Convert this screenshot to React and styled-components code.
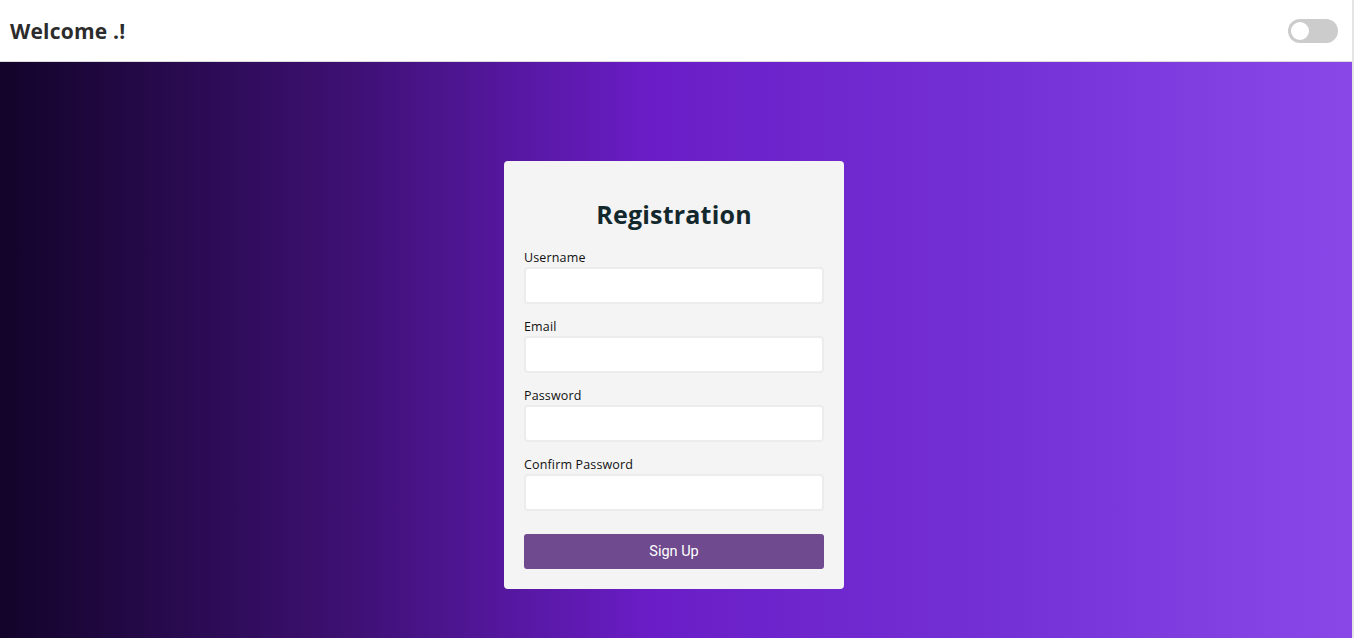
import React from 'react'
import styled, { createGlobalStyle } from 'styled-components'

const Global = createGlobalStyle`
  html, body {
    margin: 0;
    padding: 0;
    height: 100%;
    font-family: "Open Sans", "Liberation Sans", sans-serif;
  }
  #root {
    height: 100%;
  }
  * {
    box-sizing: border-box;
  }
`

const Page = styled.div`
  height: 638px;
  display: flex;
  flex-direction: column;
  border-right: 2px solid #e4e4e4;
  overflow: hidden;
`

const Header = styled.header`
  height: 62px;
  flex-shrink: 0;
  background: #fff;
  border-bottom: 1px solid #dcdcdc;
  border-top-right-radius: 8px;
  display: flex;
  align-items: center;
  justify-content: space-between;
  padding: 0 14px 0 10px;
`

const Welcome = styled.h1`
  margin: 0;
  font-size: 21px;
  font-weight: 700;
  color: #2c2c2c;
  letter-spacing: 0.2px;
`

const Switch = styled.div`
  width: 50px;
  height: 24px;
  border-radius: 12px;
  background: ${p => (p.on ? '#6f4a8e' : '#cccccc')};
  display: flex;
  align-items: center;
  padding: 0 3px;
  justify-content: ${p => (p.on ? 'flex-end' : 'flex-start')};
`

const Knob = styled.span`
  width: 18px;
  height: 18px;
  border-radius: 50%;
  background: #fff;
`

const Main = styled.main`
  flex: 1;
  background: linear-gradient(90deg, #13042a 0%, #3c1070 25%, #6a1dc6 48%, #7431d6 75%, #8a47e8 100%);
  display: flex;
  justify-content: center;
  padding-top: 99px;
  padding-right: 4px;
`

const Card = styled.form`
  width: 340px;
  height: 428px;
  background: #f4f4f4;
  border-radius: 4px;
  padding: 35px 20px 20px;
  display: flex;
  flex-direction: column;
`

const Title = styled.h2`
  margin: 0 0 17px;
  text-align: center;
  font-size: 25px;
  font-weight: 700;
  color: #13282d;
  line-height: 36px;
  letter-spacing: 0.2px;
`

const Field = styled.div`
  display: flex;
  flex-direction: column;
  margin-bottom: 14px;
`

const Label = styled.label`
  font-size: 12.5px;
  color: #111;
  line-height: 18px;
  letter-spacing: 0.15px;
`

const Input = styled.input`
  height: 37px;
  width: 100%;
  border: 2px solid #ececec;
  border-radius: 4px;
  background: #fff;
  outline: none;
  font-family: inherit;
`

const Submit = styled.button`
  margin-top: 9px;
  height: 35px;
  width: 100%;
  border: none;
  border-radius: 3px;
  background: #6f4a8e;
  color: #fff;
  font-family: Roboto, "Liberation Sans", sans-serif;
  font-size: 14.5px;
  font-weight: 400;
  cursor: pointer;
`

const fields = ['Username', 'Email', 'Password', 'Confirm Password']

export default function App() {
  return (
    <Page>
      <Global />
      <Header>
        <Welcome>Welcome .!</Welcome>
        <Switch>
          <Knob />
        </Switch>
      </Header>
      <Main>
        <Card onSubmit={e => e.preventDefault()}>
          <Title>Registration</Title>
          {fields.map(f => (
            <Field key={f}>
              <Label>{f}</Label>
              <Input type={f.includes('Password') ? 'password' : 'text'} />
            </Field>
          ))}
          <Submit type="submit">Sign Up</Submit>
        </Card>
      </Main>
    </Page>
  )
}
